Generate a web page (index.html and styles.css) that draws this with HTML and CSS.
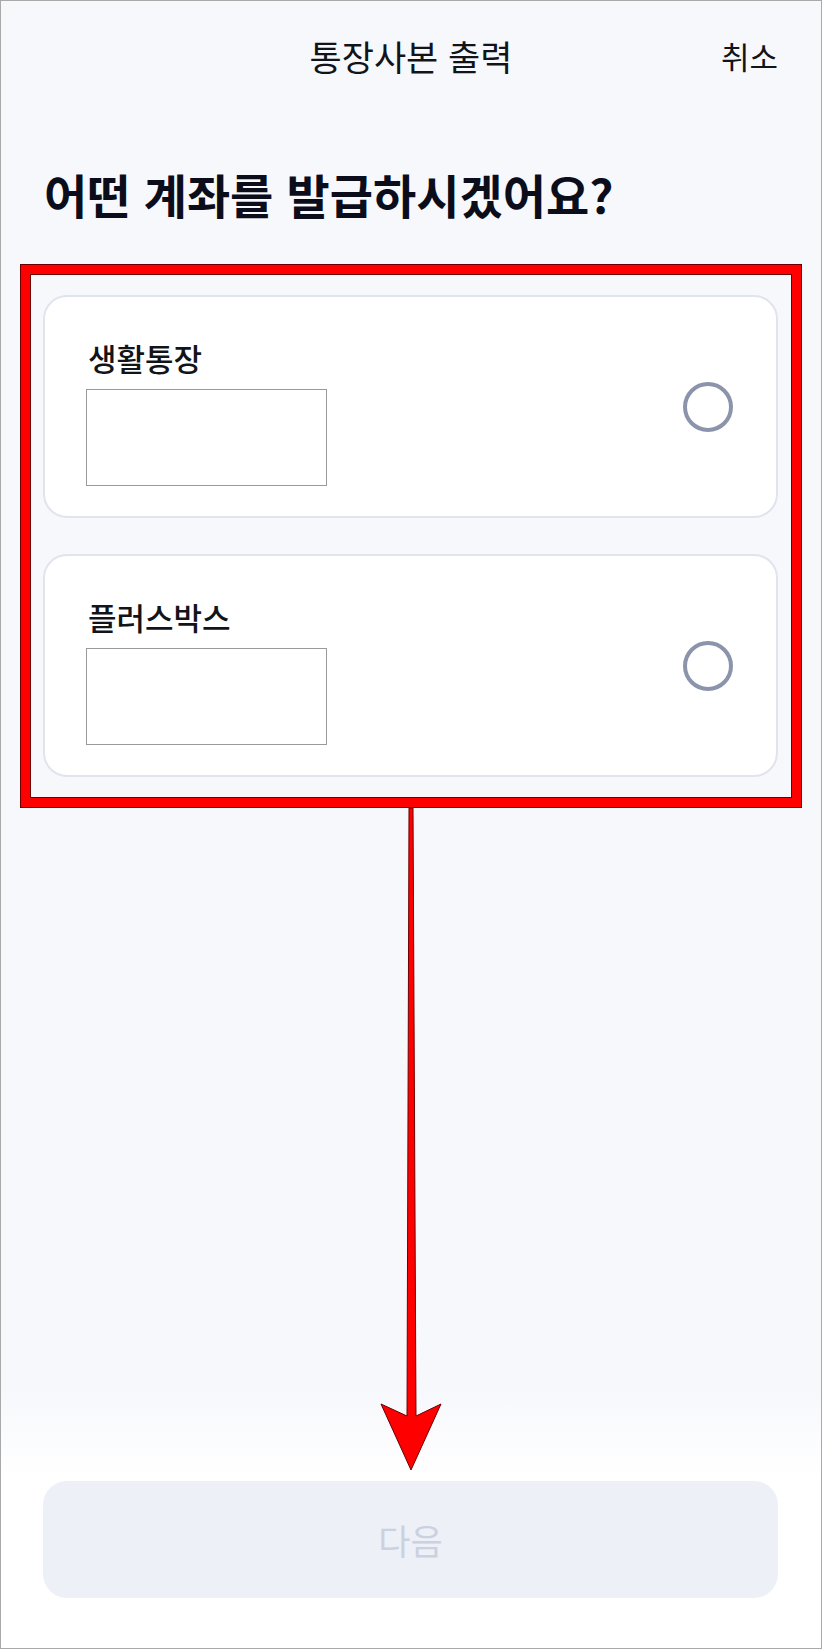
FILE: index.html
```html
<!DOCTYPE html>
<html lang="ko">
<head>
<meta charset="utf-8">
<title>통장사본 출력</title>
<link rel="stylesheet" href="styles.css">
</head>
<body>
<div class="screen">
  <header class="topbar">
    <span class="topbar-side"></span>
    <span class="topbar-title">통장사본 출력</span>
    <span class="topbar-action">취소</span>
  </header>

  <h1 class="question">어떤 계좌를 발급하시겠어요?</h1>

  <div class="account-list">
    <div class="account-card">
      <div class="account-info">
        <div class="account-name">생활통장</div>
        <div class="account-number"></div>
      </div>
      <div class="radio"></div>
    </div>
    <div class="account-card">
      <div class="account-info">
        <div class="account-name">플러스박스</div>
        <div class="account-number"></div>
      </div>
      <div class="radio"></div>
    </div>
  </div>

  <div class="spacer"></div>

  <div class="bottom">
    <button class="next-btn" type="button">다음</button>
  </div>

  <div class="highlight-box"></div>
  <svg class="arrow" viewBox="371 797 80 680" xmlns="http://www.w3.org/2000/svg">
    <polygon points="409,808 413,808 416,1416 441,1404 411,1470 381,1404 407,1416" fill="#ff0000" stroke="#6a0000" stroke-width="1" stroke-linejoin="miter"/>
  </svg>
</div>
</body>
</html>
```

FILE: styles.css
```css
* {
  box-sizing: border-box;
}

html, body {
  margin: 0;
  padding: 0;
  background: #ffffff;
}

body {
  font-family: "Noto Sans CJK KR", "Noto Sans", sans-serif;
  color: #191f28;
}

.screen {
  position: relative;
  width: 822px;
  height: 1649px;
  border: 1px solid #a9a9a9;
  background: linear-gradient(to bottom, #f7f8fc 0px, #f7f8fc 1390px, #ffffff 1475px, #ffffff 100%);
  display: flex;
  flex-direction: column;
  overflow: hidden;
}

.topbar {
  height: 111px;
  display: grid;
  grid-template-columns: 1fr auto 1fr;
  align-items: center;
  padding: 0 43px 0 43px;
}

.topbar-title {
  font-size: 35px;
  font-weight: 400;
  color: #111418;
  line-height: 42px;
  padding-bottom: 2px;
}

.topbar-action {
  justify-self: end;
  font-size: 31px;
  font-weight: 400;
  color: #111418;
  line-height: 42px;
  padding-bottom: 2px;
}

.question {
  margin: 53px 0 0 0;
  padding: 0 0 0 43px;
  font-size: 47px;
  font-weight: 700;
  line-height: 58px;
  letter-spacing: 0;
  color: #0b0e1a;
}

.account-list {
  margin-top: 72px;
  padding: 0 43px 0 42px;
  display: flex;
  flex-direction: column;
  gap: 36px;
}

.account-card {
  height: 223px;
  background: #ffffff;
  border: 2px solid #dfe4ed;
  border-radius: 24px;
  padding: 43px 43px 0 41px;
  display: flex;
  align-items: flex-start;
}

.account-info {
  display: flex;
  flex-direction: column;
  gap: 13px;
}

.account-name {
  font-size: 31px;
  font-weight: 500;
  line-height: 36px;
  padding-left: 2px;
  letter-spacing: 0;
  color: #111418;
}

.account-number {
  width: 241px;
  height: 97px;
  background: #ffffff;
  border: 1px solid #9a9a9a;
}

.radio {
  margin-left: auto;
  align-self: center;
  margin-top: -43px;
  width: 50px;
  height: 50px;
  border-radius: 50%;
  border: 4px solid #8b94ab;
}

.spacer {
  flex: 1;
}

.bottom {
  padding: 0 43px 50px 42px;
}

.next-btn {
  display: block;
  width: 100%;
  height: 117px;
  border: none;
  border-radius: 24px;
  background: #edf1f7;
  color: #cbd1e0;
  font-family: "Noto Sans CJK KR", "Noto Sans", sans-serif;
  font-size: 35px;
  font-weight: 400;
  padding: 0;
}

.highlight-box {
  position: absolute;
  left: 20px;
  top: 264px;
  width: 780px;
  height: 542px;
  border: 9px solid #ff0000;
  outline: 1px solid #6a0000;
  box-shadow: inset 0 0 0 1px #6a0000;
  pointer-events: none;
}

.arrow {
  position: absolute;
  left: 370px;
  top: 796px;
  width: 80px;
  height: 680px;
  overflow: visible;
  pointer-events: none;
}
```
